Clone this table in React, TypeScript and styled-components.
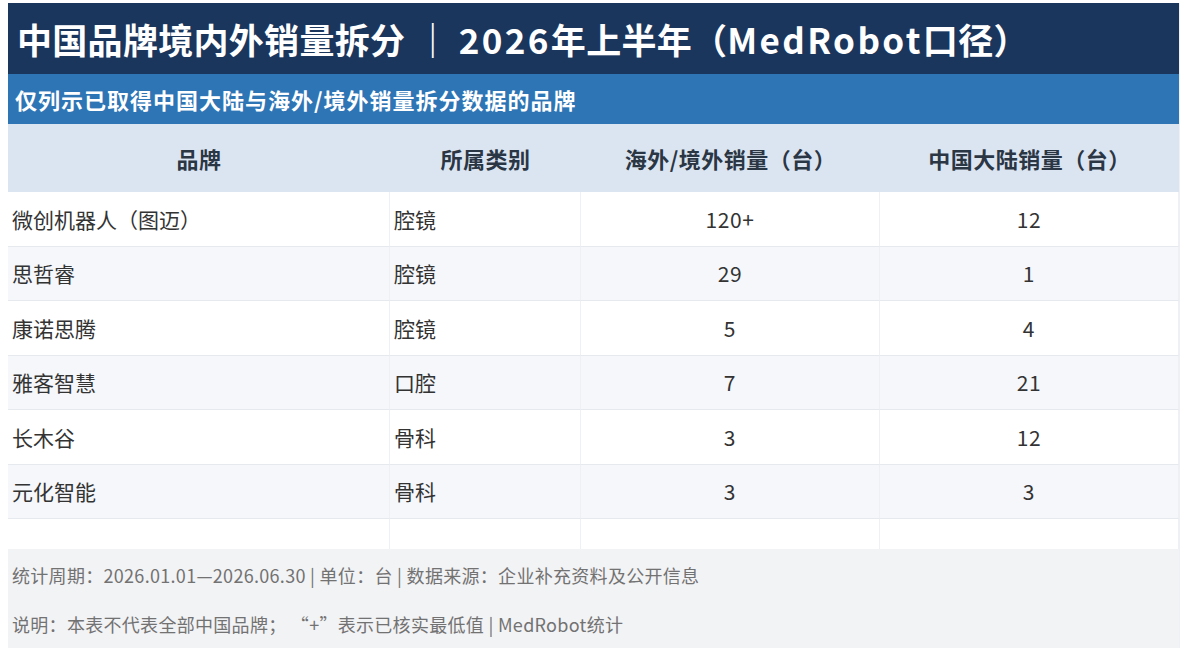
import React from "react";
import styled, { createGlobalStyle } from "styled-components";

const GlobalStyle = createGlobalStyle`
  html, body { margin: 0; padding: 0; background: #ffffff; }
  body {
    font-family: "Noto Sans CJK SC", "Noto Sans", "Liberation Sans", sans-serif;
    -webkit-font-smoothing: antialiased;
  }
`;

const Page = styled.div`
  padding: 3px 14px 8px 8px;
`;

const Card = styled.div`
  width: 1171px;
  display: flex;
  flex-direction: column;
  box-shadow: 1px 0 0 #eef0f3;
`;

const TitleBar = styled.div`
  height: 71px;
  background: #1b365d;
  display: flex;
  align-items: center;
  padding-left: 9px;
  color: #ffffff;
  font-size: 35px;
  font-weight: 700;
  letter-spacing: 0.3px;
  white-space: nowrap;
`;

const Sep = styled.span`
  margin: 0 8px 0 10px;
`;

const Latin = styled.span`
  letter-spacing: 2.4px;
`;

const SubBar = styled.div`
  height: 50px;
  background: #2e75b6;
  display: flex;
  align-items: center;
  padding-left: 7px;
  color: #ffffff;
  font-size: 22px;
  font-weight: 700;
  letter-spacing: 1px;
`;

const Grid = styled.div`
  display: grid;
  grid-template-columns: 382px 191px 299px 299px;
`;

const HeadCell = styled.div`
  height: 68px;
  background: #dbe5f1;
  display: flex;
  align-items: center;
  justify-content: center;
  color: #2b3645;
  font-size: 22px;
  font-weight: 700;
  letter-spacing: 0.5px;
`;

const Cell = styled.div<{ $alt: boolean; $center?: boolean; $h: number; $last?: boolean }>`
  height: ${(p) => p.$h}px;
  box-sizing: border-box;
  background: ${(p) => (p.$alt ? "#f5f7fb" : "#ffffff")};
  border-bottom: ${(p) => (p.$last ? "none" : "1px solid #e6e9ee")};
  border-right: 1px solid #eef0f3;
  display: flex;
  align-items: center;
  justify-content: ${(p) => (p.$center ? "center" : "flex-start")};
  padding-left: ${(p) => (p.$center ? "0" : "4px")};
  color: #333333;
  font-size: 21px;
  letter-spacing: ${(p) => (p.$center ? "0.6px" : "0")};
`;

const Footer = styled.div`
  background: #f2f3f5;
  display: flex;
  flex-direction: column;
  gap: 25px;
  padding: 14px 4px 0 4px;
  height: 99px;
  box-sizing: border-box;
`;

const Note = styled.div`
  font-size: 18px;
  line-height: 24px;
  color: #727272;
  letter-spacing: 0.3px;
`;

const rows: [string, string, string, string][] = [
  ["微创机器人（图迈）", "腔镜", "120+", "12"],
  ["思哲睿", "腔镜", "29", "1"],
  ["康诺思腾", "腔镜", "5", "4"],
  ["雅客智慧", "口腔", "7", "21"],
  ["长木谷", "骨科", "3", "12"],
  ["元化智能", "骨科", "3", "3"],
];

export default function App() {
  return (
    <>
      <GlobalStyle />
      <Page>
        <Card>
          <TitleBar>
            中国品牌境内外销量拆分<Sep>｜</Sep><Latin>2026</Latin>年上半年（<Latin>MedRobot</Latin>口径）
          </TitleBar>
          <SubBar>仅列示已取得中国大陆与海外/境外销量拆分数据的品牌</SubBar>
          <Grid>
            <HeadCell>品牌</HeadCell>
            <HeadCell>所属类别</HeadCell>
            <HeadCell>海外/境外销量（台）</HeadCell>
            <HeadCell>中国大陆销量（台）</HeadCell>
            {rows.map((r, i) => (
              <React.Fragment key={r[0]}>
                <Cell $alt={i % 2 === 1} $h={54.5}>{r[0]}</Cell>
                <Cell $alt={i % 2 === 1} $h={54.5}>{r[1]}</Cell>
                <Cell $alt={i % 2 === 1} $h={54.5} $center>{r[2]}</Cell>
                <Cell $alt={i % 2 === 1} $h={54.5} $center>{r[3]}</Cell>
              </React.Fragment>
            ))}
            <Cell $alt={false} $h={30} $last />
            <Cell $alt={false} $h={30} $last />
            <Cell $alt={false} $h={30} $last />
            <Cell $alt={false} $h={30} $last />
          </Grid>
          <Footer>
            <Note>统计周期：2026.01.01—2026.06.30 | 单位：台 | 数据来源：企业补充资料及公开信息</Note>
            <Note>说明：本表不代表全部中国品牌； “+”表示已核实最低值 | MedRobot统计</Note>
          </Footer>
        </Card>
      </Page>
    </>
  );
}
